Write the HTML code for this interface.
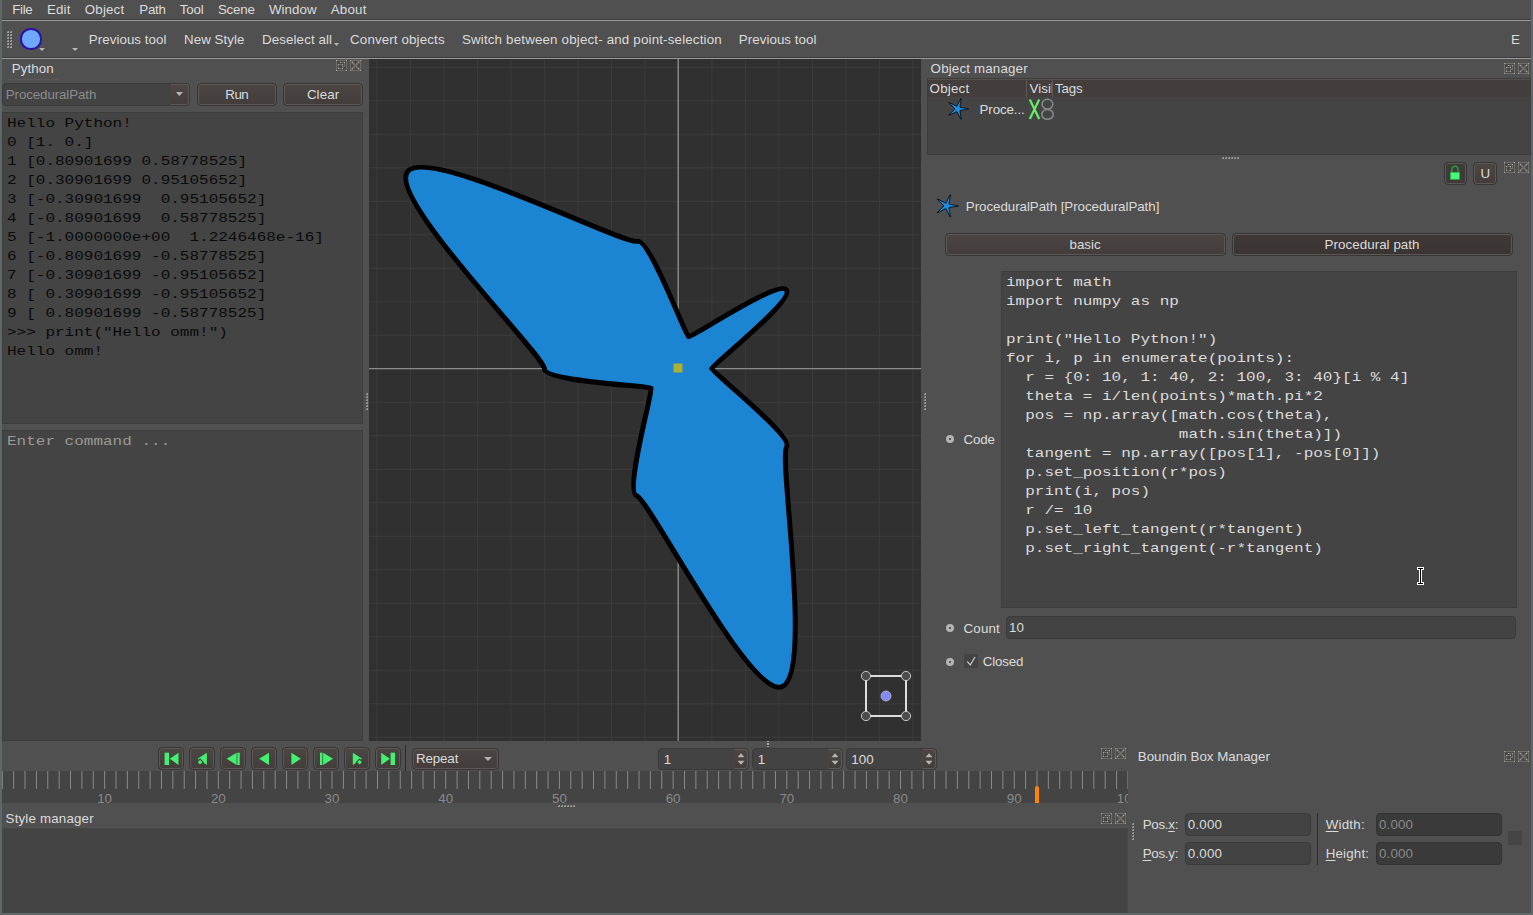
<!DOCTYPE html><html><head><meta charset="utf-8"><title>ommpfritt</title><style>

html,body{margin:0;padding:0;background:#505050;}
body{width:1533px;height:915px;position:relative;overflow:hidden;font-family:"Liberation Sans",sans-serif;}
.a{position:absolute;}
.t{position:absolute;white-space:pre;font-family:"Liberation Sans",sans-serif;}
.t u{text-decoration:underline;text-underline-offset:2px;}
.base{position:absolute;background:#444444;border:1px solid #3d3d3d;box-sizing:border-box;}
.btn{position:absolute;box-sizing:border-box;border:1px solid #363636;border-radius:4px;background:linear-gradient(#4b4544,#423c3b);box-shadow:inset 0 0 0 1px #5d5755;}
.field{position:absolute;box-sizing:border-box;border:1px solid #3a3a3a;border-radius:4px;background:#434343;}
.mono{position:absolute;white-space:pre;font-family:"Liberation Mono",monospace;font-size:13px;line-height:19px;transform:scaleX(1.2308);transform-origin:0 0;}
svg{position:absolute;overflow:visible;}

</style></head><body>
<div class="a" style="left:0;top:0;width:2px;height:915px;background:#5f6769"></div>
<div class="a" style="left:1531px;top:0;width:2px;height:915px;background:#5f6769"></div>
<div class="a" style="left:0;top:913px;width:1533px;height:2px;background:#5f6769"></div>
<div class="a" style="left:2px;top:19px;width:1529px;height:1px;background:#3c3c3c"></div>
<div class="a" style="left:2px;top:20px;width:1529px;height:1px;background:#9a9a9a"></div>
<div class="a" style="left:2px;top:57px;width:1529px;height:1px;background:#3c3c3c"></div>
<div class="a" style="left:2px;top:58px;width:1529px;height:1px;background:#9a9a9a"></div>
<div class="a" style="left:7px;top:31px;width:2px;height:2px;background:#a0a0a0"><div style="width:1px;height:1px;background:#707070"></div></div>
<div class="a" style="left:10px;top:31px;width:2px;height:2px;background:#a0a0a0"><div style="width:1px;height:1px;background:#707070"></div></div>
<div class="a" style="left:7px;top:34px;width:2px;height:2px;background:#a0a0a0"><div style="width:1px;height:1px;background:#707070"></div></div>
<div class="a" style="left:10px;top:34px;width:2px;height:2px;background:#a0a0a0"><div style="width:1px;height:1px;background:#707070"></div></div>
<div class="a" style="left:7px;top:37px;width:2px;height:2px;background:#a0a0a0"><div style="width:1px;height:1px;background:#707070"></div></div>
<div class="a" style="left:10px;top:37px;width:2px;height:2px;background:#a0a0a0"><div style="width:1px;height:1px;background:#707070"></div></div>
<div class="a" style="left:7px;top:40px;width:2px;height:2px;background:#a0a0a0"><div style="width:1px;height:1px;background:#707070"></div></div>
<div class="a" style="left:10px;top:40px;width:2px;height:2px;background:#a0a0a0"><div style="width:1px;height:1px;background:#707070"></div></div>
<div class="a" style="left:7px;top:43px;width:2px;height:2px;background:#a0a0a0"><div style="width:1px;height:1px;background:#707070"></div></div>
<div class="a" style="left:10px;top:43px;width:2px;height:2px;background:#a0a0a0"><div style="width:1px;height:1px;background:#707070"></div></div>
<div class="a" style="left:7px;top:46px;width:2px;height:2px;background:#a0a0a0"><div style="width:1px;height:1px;background:#707070"></div></div>
<div class="a" style="left:10px;top:46px;width:2px;height:2px;background:#a0a0a0"><div style="width:1px;height:1px;background:#707070"></div></div>
<div class="a" style="left:20.4px;top:28.4px;width:17.2px;height:17.2px;border:2px solid #2a12a4;border-radius:50%;background:#6ea8ff"></div>
<svg style="left:39.0px;top:48.0px" width="6" height="3"><path d="M0 0h6 l-3.0 3 z" fill="#b8b8b8"/></svg>
<svg style="left:72.0px;top:48.0px" width="6" height="3"><path d="M0 0h6 l-3.0 3 z" fill="#b8b8b8"/></svg>
<svg style="left:333.5px;top:43.0px" width="5" height="3"><path d="M0 0h5 l-2.5 3 z" fill="#b8b8b8"/></svg>
<svg style="left:336px;top:60px" width="26" height="12" viewBox="0 0 26 12" shape-rendering="crispEdges"><rect x="0.5" y="0.5" width="10" height="10" fill="#494949" stroke="#6f6d6a" stroke-width="1"/><rect x="0" y="0" width="1" height="1" fill="#a9a5a1"/><rect x="10" y="0" width="1" height="1" fill="#a9a5a1"/><rect x="0" y="10" width="1" height="1" fill="#a9a5a1"/><rect x="10" y="10" width="1" height="1" fill="#a9a5a1"/><rect x="14.5" y="0.5" width="10" height="10" fill="#494949" stroke="#6f6d6a" stroke-width="1"/><rect x="14" y="0" width="1" height="1" fill="#a9a5a1"/><rect x="24" y="0" width="1" height="1" fill="#a9a5a1"/><rect x="14" y="10" width="1" height="1" fill="#a9a5a1"/><rect x="24" y="10" width="1" height="1" fill="#a9a5a1"/><path d="M4.5 2.5h4v4h-2" fill="none" stroke="#6f6d6a" stroke-width="1"/><rect x="2.5" y="4.5" width="4" height="4" fill="#454545" stroke="#6f6d6a" stroke-width="1"/><rect x="4" y="2" width="1" height="1" fill="#a9a5a1"/><rect x="8" y="2" width="1" height="1" fill="#a9a5a1"/><rect x="2" y="4" width="1" height="1" fill="#a9a5a1"/><rect x="6" y="4" width="1" height="1" fill="#a9a5a1"/><rect x="2" y="8" width="1" height="1" fill="#a9a5a1"/><rect x="6" y="8" width="1" height="1" fill="#a9a5a1"/><path d="M15.5 1.5l8 8M23.5 1.5l-8 8" fill="none" stroke="#706d6a" stroke-width="1.8" shape-rendering="auto"/><rect x="16" y="2" width="1" height="1" fill="#a9a5a1"/><rect x="22" y="2" width="1" height="1" fill="#a9a5a1"/><rect x="16" y="8" width="1" height="1" fill="#a9a5a1"/><rect x="22" y="8" width="1" height="1" fill="#a9a5a1"/></svg>
<div class="a" style="left:8px;top:79px;width:50px;height:1px;background:#585858"></div>
<div class="field" style="left:2px;top:83px;width:188px;height:23px;background:#434343"></div>
<div class="a" style="left:171px;top:84px;width:18px;height:21px;box-sizing:border-box;border:1px solid #5d5755;border-left:none;border-radius:0 3px 3px 0;background:linear-gradient(#4d4645,#433d3c)"></div>
<svg style="left:176.0px;top:92.3px" width="7" height="4"><path d="M0 0h7 l-3.7 4 z" fill="#b4b4b4"/></svg>
<div class="btn" style="left:197px;top:83px;width:80px;height:23px"></div>
<div class="btn" style="left:283px;top:83px;width:80px;height:23px"></div>
<div class="base" style="left:2px;top:112px;width:361px;height:312px"></div>
<div class="base" style="left:2px;top:430px;width:361px;height:311px"></div>
<div class="mono" style="left:7px;top:113.6px;color:#0a0a0a">Hello Python!
0 [1. 0.]
1 [0.80901699 0.58778525]
2 [0.30901699 0.95105652]
3 [-0.30901699  0.95105652]
4 [-0.80901699  0.58778525]
5 [-1.0000000e+00  1.2246468e-16]
6 [-0.80901699 -0.58778525]
7 [-0.30901699 -0.95105652]
8 [ 0.30901699 -0.95105652]
9 [ 0.80901699 -0.58778525]
&gt;&gt;&gt; print("Hello omm!")
Hello omm!</div>
<div class="mono" style="left:7px;top:431.6px;color:#9a9a9a">Enter command ...</div>
<div class="a" style="left:366px;top:393px;width:2px;height:2px;background:#9a9a9a"><div style="width:1px;height:1px;background:#6c6c6c"></div></div><div class="a" style="left:366px;top:396px;width:2px;height:2px;background:#9a9a9a"><div style="width:1px;height:1px;background:#6c6c6c"></div></div><div class="a" style="left:366px;top:399px;width:2px;height:2px;background:#9a9a9a"><div style="width:1px;height:1px;background:#6c6c6c"></div></div><div class="a" style="left:366px;top:402px;width:2px;height:2px;background:#9a9a9a"><div style="width:1px;height:1px;background:#6c6c6c"></div></div><div class="a" style="left:366px;top:405px;width:2px;height:2px;background:#9a9a9a"><div style="width:1px;height:1px;background:#6c6c6c"></div></div><div class="a" style="left:366px;top:408px;width:2px;height:2px;background:#9a9a9a"><div style="width:1px;height:1px;background:#6c6c6c"></div></div>
<svg style="left:369px;top:59px" width="552" height="682" viewBox="369 59 552 682">
<rect x="369" y="59" width="552" height="682" fill="#303030"/>
<path d="M376.90 59 V741 M369 67.30 H921 M410.40 59 V741 M369 100.80 H921 M443.90 59 V741 M369 134.30 H921 M477.40 59 V741 M369 167.80 H921 M510.90 59 V741 M369 201.30 H921 M544.40 59 V741 M369 234.80 H921 M577.90 59 V741 M369 268.30 H921 M611.40 59 V741 M369 301.80 H921 M644.90 59 V741 M369 335.30 H921 M711.90 59 V741 M369 402.30 H921 M745.40 59 V741 M369 435.80 H921 M778.90 59 V741 M369 469.30 H921 M812.40 59 V741 M369 502.80 H921 M845.90 59 V741 M369 536.30 H921 M879.40 59 V741 M369 569.80 H921 M912.90 59 V741 M369 603.30 H921 M369 636.80 H921 M369 670.30 H921 M369 703.80 H921 M369 737.30 H921" stroke="#3c3c3c" stroke-width="1" fill="none"/>
<path d="M678.20 59 V741 M369 368.60 H921" stroke="#8c8c8c" stroke-width="1.4" fill="none"/>
<path d="M711.67 368.60 C711.67 371.95 794.38 436.46 786.51 447.29 C778.64 458.12 813.46 676.58 781.63 686.92 C749.80 697.26 649.56 500.06 636.83 495.93 C624.10 491.79 653.09 390.98 651.12 388.27 C649.15 385.57 544.32 381.99 544.32 368.60 C544.32 355.21 387.75 198.95 407.42 171.87 C427.10 144.79 624.10 245.41 636.83 241.27 C649.56 237.14 685.36 335.73 688.54 336.77 C691.73 337.80 778.64 279.08 786.51 289.91 C794.38 300.74 711.67 365.25 711.67 368.60Z" fill="#1b84d3" stroke="#000" stroke-width="5" stroke-linejoin="round"/>
<rect x="673.5" y="363.5" width="9" height="9" fill="#b0b030"/>
<rect x="866" y="676" width="40" height="40" fill="none" stroke="#dcdcdc" stroke-width="2"/>
<circle cx="866" cy="676" r="4.6" fill="#4c4c4c" stroke="#d6d6d6" stroke-width="0.9"/>
<circle cx="906" cy="676" r="4.6" fill="#4c4c4c" stroke="#d6d6d6" stroke-width="0.9"/>
<circle cx="866" cy="716" r="4.6" fill="#4c4c4c" stroke="#d6d6d6" stroke-width="0.9"/>
<circle cx="906" cy="716" r="4.6" fill="#4c4c4c" stroke="#d6d6d6" stroke-width="0.9"/>
<circle cx="886" cy="696" r="5" fill="#8888f2" stroke="#b4b4d0" stroke-width="0.8"/>
</svg>
<div class="a" style="left:924px;top:393px;width:2px;height:2px;background:#9a9a9a"><div style="width:1px;height:1px;background:#6c6c6c"></div></div><div class="a" style="left:924px;top:396px;width:2px;height:2px;background:#9a9a9a"><div style="width:1px;height:1px;background:#6c6c6c"></div></div><div class="a" style="left:924px;top:399px;width:2px;height:2px;background:#9a9a9a"><div style="width:1px;height:1px;background:#6c6c6c"></div></div><div class="a" style="left:924px;top:402px;width:2px;height:2px;background:#9a9a9a"><div style="width:1px;height:1px;background:#6c6c6c"></div></div><div class="a" style="left:924px;top:405px;width:2px;height:2px;background:#9a9a9a"><div style="width:1px;height:1px;background:#6c6c6c"></div></div><div class="a" style="left:924px;top:408px;width:2px;height:2px;background:#9a9a9a"><div style="width:1px;height:1px;background:#6c6c6c"></div></div>
<svg style="left:1504px;top:63px" width="26" height="12" viewBox="0 0 26 12" shape-rendering="crispEdges"><rect x="0.5" y="0.5" width="10" height="10" fill="#494949" stroke="#6f6d6a" stroke-width="1"/><rect x="0" y="0" width="1" height="1" fill="#a9a5a1"/><rect x="10" y="0" width="1" height="1" fill="#a9a5a1"/><rect x="0" y="10" width="1" height="1" fill="#a9a5a1"/><rect x="10" y="10" width="1" height="1" fill="#a9a5a1"/><rect x="14.5" y="0.5" width="10" height="10" fill="#494949" stroke="#6f6d6a" stroke-width="1"/><rect x="14" y="0" width="1" height="1" fill="#a9a5a1"/><rect x="24" y="0" width="1" height="1" fill="#a9a5a1"/><rect x="14" y="10" width="1" height="1" fill="#a9a5a1"/><rect x="24" y="10" width="1" height="1" fill="#a9a5a1"/><path d="M4.5 2.5h4v4h-2" fill="none" stroke="#6f6d6a" stroke-width="1"/><rect x="2.5" y="4.5" width="4" height="4" fill="#454545" stroke="#6f6d6a" stroke-width="1"/><rect x="4" y="2" width="1" height="1" fill="#a9a5a1"/><rect x="8" y="2" width="1" height="1" fill="#a9a5a1"/><rect x="2" y="4" width="1" height="1" fill="#a9a5a1"/><rect x="6" y="4" width="1" height="1" fill="#a9a5a1"/><rect x="2" y="8" width="1" height="1" fill="#a9a5a1"/><rect x="6" y="8" width="1" height="1" fill="#a9a5a1"/><path d="M15.5 1.5l8 8M23.5 1.5l-8 8" fill="none" stroke="#706d6a" stroke-width="1.8" shape-rendering="auto"/><rect x="16" y="2" width="1" height="1" fill="#a9a5a1"/><rect x="22" y="2" width="1" height="1" fill="#a9a5a1"/><rect x="16" y="8" width="1" height="1" fill="#a9a5a1"/><rect x="22" y="8" width="1" height="1" fill="#a9a5a1"/></svg>
<div class="base" style="left:927px;top:78px;width:604px;height:77px"></div>
<div class="a" style="left:928px;top:79px;width:602px;height:18px;background:#433d3c;border-top:1px solid #56504e;box-sizing:border-box"></div>
<div class="a" style="left:1026px;top:79px;width:1px;height:18px;background:#5e5856"></div>
<div class="a" style="left:1052px;top:79px;width:1px;height:18px;background:#5e5856"></div>
<div class="a" style="left:1051px;top:83px;width:1px;height:10px;background:#4f6696"></div>
<svg style="left:0;top:0" width="1533" height="915"><path d="M959.97 107.25 C961.62 107.75 965.88 108.05 968.60 108.90 C965.88 109.75 961.62 110.05 959.97 110.55 C960.01 112.28 961.03 116.41 961.07 119.27 C959.42 116.94 957.82 112.99 956.83 111.56 C955.20 112.14 951.59 114.39 948.88 115.31 C950.59 113.02 953.85 110.28 954.90 108.90 C953.85 107.52 950.59 104.78 948.88 102.49 C951.59 103.41 955.20 105.66 956.83 106.24 C957.82 104.81 959.42 100.86 961.07 98.53 C961.03 101.39 960.01 105.52 959.97 107.25Z" fill="#1c8ee0" stroke="#000" stroke-width="0.8" stroke-linejoin="round"/></svg>
<svg style="left:1028px;top:98px" width="30" height="24"><path d="M1.8 1.5 L11.2 21 M11.2 1.500 L1.8 21" stroke="#66ee66" stroke-width="2.2" fill="none"/><ellipse cx="19.5" cy="6.2" rx="5.4" ry="4.9" fill="none" stroke="#8a8a8a" stroke-width="1.5"/><ellipse cx="19.5" cy="16.4" rx="5.7" ry="4.9" fill="none" stroke="#8a8a8a" stroke-width="1.5"/></svg>
<div class="a" style="left:1222px;top:157px;width:2px;height:2px;background:#9a9a9a"><div style="width:1px;height:1px;background:#6c6c6c"></div></div><div class="a" style="left:1225px;top:157px;width:2px;height:2px;background:#9a9a9a"><div style="width:1px;height:1px;background:#6c6c6c"></div></div><div class="a" style="left:1228px;top:157px;width:2px;height:2px;background:#9a9a9a"><div style="width:1px;height:1px;background:#6c6c6c"></div></div><div class="a" style="left:1231px;top:157px;width:2px;height:2px;background:#9a9a9a"><div style="width:1px;height:1px;background:#6c6c6c"></div></div><div class="a" style="left:1234px;top:157px;width:2px;height:2px;background:#9a9a9a"><div style="width:1px;height:1px;background:#6c6c6c"></div></div><div class="a" style="left:1237px;top:157px;width:2px;height:2px;background:#9a9a9a"><div style="width:1px;height:1px;background:#6c6c6c"></div></div>
<svg style="left:1504px;top:162px" width="26" height="12" viewBox="0 0 26 12" shape-rendering="crispEdges"><rect x="0.5" y="0.5" width="10" height="10" fill="#494949" stroke="#6f6d6a" stroke-width="1"/><rect x="0" y="0" width="1" height="1" fill="#a9a5a1"/><rect x="10" y="0" width="1" height="1" fill="#a9a5a1"/><rect x="0" y="10" width="1" height="1" fill="#a9a5a1"/><rect x="10" y="10" width="1" height="1" fill="#a9a5a1"/><rect x="14.5" y="0.5" width="10" height="10" fill="#494949" stroke="#6f6d6a" stroke-width="1"/><rect x="14" y="0" width="1" height="1" fill="#a9a5a1"/><rect x="24" y="0" width="1" height="1" fill="#a9a5a1"/><rect x="14" y="10" width="1" height="1" fill="#a9a5a1"/><rect x="24" y="10" width="1" height="1" fill="#a9a5a1"/><path d="M4.5 2.5h4v4h-2" fill="none" stroke="#6f6d6a" stroke-width="1"/><rect x="2.5" y="4.5" width="4" height="4" fill="#454545" stroke="#6f6d6a" stroke-width="1"/><rect x="4" y="2" width="1" height="1" fill="#a9a5a1"/><rect x="8" y="2" width="1" height="1" fill="#a9a5a1"/><rect x="2" y="4" width="1" height="1" fill="#a9a5a1"/><rect x="6" y="4" width="1" height="1" fill="#a9a5a1"/><rect x="2" y="8" width="1" height="1" fill="#a9a5a1"/><rect x="6" y="8" width="1" height="1" fill="#a9a5a1"/><path d="M15.5 1.5l8 8M23.5 1.5l-8 8" fill="none" stroke="#706d6a" stroke-width="1.8" shape-rendering="auto"/><rect x="16" y="2" width="1" height="1" fill="#a9a5a1"/><rect x="22" y="2" width="1" height="1" fill="#a9a5a1"/><rect x="16" y="8" width="1" height="1" fill="#a9a5a1"/><rect x="22" y="8" width="1" height="1" fill="#a9a5a1"/></svg>
<div class="btn" style="left:1443.500px;top:161.500px;width:23.300px;height:23.300px;background:#3f3938"></div>
<div class="btn" style="left:1473.300px;top:161.500px;width:23.300px;height:23.300px"></div>
<svg style="left:1447px;top:164px" width="16" height="18"><path d="M5 8.5 V5.2 a3 3 0 0 1 6 0 V8.5" fill="none" stroke="#2a9a3c" stroke-width="1.4"/><rect x="3.500" y="8.300" width="9" height="7" fill="#46fa7a" stroke="#2eae4c" stroke-width="0.8"/></svg>
<svg style="left:0;top:0" width="1533" height="915"><path d="M948.97 204.25 C950.95 204.75 955.55 205.05 958.50 205.90 C955.55 206.75 950.95 207.05 948.97 207.55 C949.11 209.58 950.24 214.05 950.35 217.12 C948.63 214.58 946.92 210.30 945.83 208.56 C943.94 209.33 940.04 211.79 937.15 212.84 C939.04 210.41 942.59 207.47 943.90 205.90 C942.59 204.33 939.04 201.39 937.15 198.96 C940.04 200.01 943.94 202.47 945.83 203.24 C946.92 201.50 948.63 197.22 950.35 194.68 C950.24 197.75 949.11 202.22 948.97 204.25Z" fill="#1c8ee0" stroke="#000" stroke-width="0.8" stroke-linejoin="round"/></svg>
<div class="btn" style="left:945px;top:233px;width:281px;height:22.500px"></div>
<div class="btn" style="left:1232px;top:233px;width:281px;height:22.500px;background:linear-gradient(#3e3837,#3a3433)"></div>
<div class="a" style="left:945.8px;top:434.9px;width:2.500px;height:2.500px;border:3px solid #b4b4b4;border-radius:50%;background:#3a3a3a"></div>
<div class="a" style="left:945.8px;top:623.8px;width:2.500px;height:2.500px;border:3px solid #b4b4b4;border-radius:50%;background:#3a3a3a"></div>
<div class="a" style="left:945.8px;top:657.5px;width:2.500px;height:2.500px;border:3px solid #b4b4b4;border-radius:50%;background:#3a3a3a"></div>
<div class="base" style="left:1001px;top:271px;width:515.500px;height:336.500px"></div>
<div class="mono" style="left:1006px;top:273px;color:#dcdcdc">import math
import numpy as np

print("Hello Python!")
for i, p in enumerate(points):
  r = {0: 10, 1: 40, 2: 100, 3: 40}[i % 4]
  theta = i/len(points)*math.pi*2
  pos = np.array([math.cos(theta),
                  math.sin(theta)])
  tangent = np.array([pos[1], -pos[0]])
  p.set_position(r*pos)
  print(i, pos)
  r /= 10
  p.set_left_tangent(r*tangent)
  p.set_right_tangent(-r*tangent)</div>
<div class="field" style="left:1006px;top:616px;width:510px;height:23px"></div>
<div class="a" style="left:964px;top:654px;width:14px;height:14px;background:#434343;border-radius:1px"></div>
<svg style="left:964px;top:654px" width="14" height="14"><path d="M3.2 7.300 L6.3 11 L11 3" fill="none" stroke="#cacaca" stroke-width="1.25"/></svg>
<svg style="left:1416px;top:566px" width="10" height="20" shape-rendering="crispEdges"><rect x="1" y="1" width="7" height="3" fill="#fff" rx="1"/><rect x="1" y="16" width="7" height="3" fill="#fff"/><rect x="3" y="1" width="3" height="18" fill="#fff"/><rect x="4" y="2" width="1" height="16" fill="#000"/><rect x="2" y="2" width="5" height="1" fill="#000"/><rect x="2" y="17" width="5" height="1" fill="#000"/></svg>
<div class="a" style="left:767px;top:741px;width:2px;height:1px;background:#a0a0a0"></div><div class="a" style="left:767px;top:743.3px;width:2px;height:2px;background:#a8a8a8"></div><div class="a" style="left:767px;top:746px;width:2px;height:1px;background:#909090"></div>
<svg style="left:1101px;top:748px" width="26" height="12" viewBox="0 0 26 12" shape-rendering="crispEdges"><rect x="0.5" y="0.5" width="10" height="10" fill="#494949" stroke="#6f6d6a" stroke-width="1"/><rect x="0" y="0" width="1" height="1" fill="#a9a5a1"/><rect x="10" y="0" width="1" height="1" fill="#a9a5a1"/><rect x="0" y="10" width="1" height="1" fill="#a9a5a1"/><rect x="10" y="10" width="1" height="1" fill="#a9a5a1"/><rect x="14.5" y="0.5" width="10" height="10" fill="#494949" stroke="#6f6d6a" stroke-width="1"/><rect x="14" y="0" width="1" height="1" fill="#a9a5a1"/><rect x="24" y="0" width="1" height="1" fill="#a9a5a1"/><rect x="14" y="10" width="1" height="1" fill="#a9a5a1"/><rect x="24" y="10" width="1" height="1" fill="#a9a5a1"/><path d="M4.5 2.5h4v4h-2" fill="none" stroke="#6f6d6a" stroke-width="1"/><rect x="2.5" y="4.5" width="4" height="4" fill="#454545" stroke="#6f6d6a" stroke-width="1"/><rect x="4" y="2" width="1" height="1" fill="#a9a5a1"/><rect x="8" y="2" width="1" height="1" fill="#a9a5a1"/><rect x="2" y="4" width="1" height="1" fill="#a9a5a1"/><rect x="6" y="4" width="1" height="1" fill="#a9a5a1"/><rect x="2" y="8" width="1" height="1" fill="#a9a5a1"/><rect x="6" y="8" width="1" height="1" fill="#a9a5a1"/><path d="M15.5 1.5l8 8M23.5 1.5l-8 8" fill="none" stroke="#706d6a" stroke-width="1.8" shape-rendering="auto"/><rect x="16" y="2" width="1" height="1" fill="#a9a5a1"/><rect x="22" y="2" width="1" height="1" fill="#a9a5a1"/><rect x="16" y="8" width="1" height="1" fill="#a9a5a1"/><rect x="22" y="8" width="1" height="1" fill="#a9a5a1"/></svg>
<div class="btn" style="left:157.5px;top:747.3px;width:26.7px;height:23px"></div>
<svg style="left:157.5px;top:747px" width="27" height="24"><rect x="6.6" y="5.7" width="4.5" height="12.3" fill="#44f070"/><path d="M20.5 5.7V18.0L11.8 11.8z" fill="#44f070"/></svg>
<div class="btn" style="left:188.5px;top:747.3px;width:26.7px;height:23px"></div>
<svg style="left:188.5px;top:747px" width="27" height="24"><path d="M17.9 5.7V18.0L8.5 11.8z" fill="#44f070"/><path d="M11.1 12.1l3.1 3.1l-3.1 3.1l-3.1 -3.1z" fill="#44f070" stroke="#433d3c" stroke-width="1.1"/></svg>
<div class="btn" style="left:219.5px;top:747.3px;width:26.7px;height:23px"></div>
<svg style="left:219.5px;top:747px" width="27" height="24"><path d="M16.6 5.7V18.0L6.7 11.8z" fill="#44f070"/><rect x="17.3" y="5.7" width="2.4" height="12.3" fill="#44f070"/></svg>
<div class="btn" style="left:250.5px;top:747.3px;width:26.7px;height:23px"></div>
<svg style="left:250.5px;top:747px" width="27" height="24"><path d="M18.0 5.7V18.0L8.1 11.8z" fill="#44f070"/></svg>
<div class="btn" style="left:281.5px;top:747.3px;width:26.7px;height:23px"></div>
<svg style="left:281.5px;top:747px" width="27" height="24"><path d="M9.4 5.7V18.0L18.8 11.8z" fill="#44f070"/></svg>
<div class="btn" style="left:312.5px;top:747.3px;width:26.7px;height:23px"></div>
<svg style="left:312.5px;top:747px" width="27" height="24"><rect x="7.0" y="5.7" width="2.4" height="12.3" fill="#44f070"/><path d="M10.1 5.7V18.0L20.0 11.8z" fill="#44f070"/></svg>
<div class="btn" style="left:343.5px;top:747.3px;width:26.7px;height:23px"></div>
<svg style="left:343.5px;top:747px" width="27" height="24"><path d="M8.8 5.7V18.0L18.2 11.8z" fill="#44f070"/><path d="M15.6 12.1l3.1 3.1l-3.1 3.1l-3.1 -3.1z" fill="#44f070" stroke="#433d3c" stroke-width="1.1"/></svg>
<div class="btn" style="left:374.5px;top:747.3px;width:26.7px;height:23px"></div>
<svg style="left:374.5px;top:747px" width="27" height="24"><path d="M6.2 5.7V18.0L14.9 11.8z" fill="#44f070"/><rect x="15.6" y="5.7" width="4.5" height="12.3" fill="#44f070"/></svg>
<div class="a" style="left:405.2px;top:745px;width:1px;height:27px;background:#2a2a2a"></div>
<div class="btn" style="left:411.5px;top:747.5px;width:87px;height:22px"></div>
<svg style="left:484.0px;top:757.0px" width="8" height="4"><path d="M0 0h8 l-4.0 4 z" fill="#b0b0b0"/></svg>
<div class="field" style="left:658px;top:748px;width:91px;height:22px"></div>
<div class="a" style="left:734px;top:749px;width:14px;height:20px;box-sizing:border-box;border:1px solid #5f5957;border-left-color:#4a4443;border-radius:0 4px 4px 0;background:linear-gradient(#4b4544,#433d3c)"></div>
<svg style="left:734px;top:749px" width="14" height="20"><path d="M3.500 8.300h7l-3.500-4z M3.500 11.800h7l-3.500 4z" fill="#b4b4b4"/></svg>
<div class="field" style="left:752px;top:748px;width:91px;height:22px"></div>
<div class="a" style="left:828px;top:749px;width:14px;height:20px;box-sizing:border-box;border:1px solid #5f5957;border-left-color:#4a4443;border-radius:0 4px 4px 0;background:linear-gradient(#4b4544,#433d3c)"></div>
<svg style="left:828px;top:749px" width="14" height="20"><path d="M3.500 8.300h7l-3.500-4z M3.500 11.800h7l-3.500 4z" fill="#b4b4b4"/></svg>
<div class="field" style="left:846px;top:748px;width:91px;height:22px"></div>
<div class="a" style="left:922px;top:749px;width:14px;height:20px;box-sizing:border-box;border:1px solid #5f5957;border-left-color:#4a4443;border-radius:0 4px 4px 0;background:linear-gradient(#4b4544,#433d3c)"></div>
<svg style="left:922px;top:749px" width="14" height="20"><path d="M3.500 8.300h7l-3.500-4z M3.500 11.800h7l-3.500 4z" fill="#b4b4b4"/></svg>
<div class="a" style="left:2px;top:770.500px;width:1126px;height:32.500px;background:#444;overflow:hidden">
<svg style="left:0;top:0" width="1126" height="33"><path d="M0.30 0V18 M11.67 0V18 M23.04 0V18 M34.41 0V18 M45.78 0V18 M57.15 0V18 M68.52 0V18 M79.89 0V18 M91.26 0V18 M102.63 0V18 M114.00 0V18 M125.37 0V18 M136.74 0V18 M148.11 0V18 M159.48 0V18 M170.85 0V18 M182.22 0V18 M193.59 0V18 M204.96 0V18 M216.33 0V18 M227.70 0V18 M239.07 0V18 M250.44 0V18 M261.81 0V18 M273.18 0V18 M284.55 0V18 M295.92 0V18 M307.29 0V18 M318.66 0V18 M330.03 0V18 M341.40 0V18 M352.77 0V18 M364.14 0V18 M375.51 0V18 M386.88 0V18 M398.25 0V18 M409.62 0V18 M420.99 0V18 M432.36 0V18 M443.73 0V18 M455.10 0V18 M466.47 0V18 M477.84 0V18 M489.21 0V18 M500.58 0V18 M511.95 0V18 M523.32 0V18 M534.69 0V18 M546.06 0V18 M557.43 0V18 M568.80 0V18 M580.17 0V18 M591.54 0V18 M602.91 0V18 M614.28 0V18 M625.65 0V18 M637.02 0V18 M648.39 0V18 M659.76 0V18 M671.13 0V18 M682.50 0V18 M693.87 0V18 M705.24 0V18 M716.61 0V18 M727.98 0V18 M739.35 0V18 M750.72 0V18 M762.09 0V18 M773.46 0V18 M784.83 0V18 M796.20 0V18 M807.57 0V18 M818.94 0V18 M830.31 0V18 M841.68 0V18 M853.05 0V18 M864.42 0V18 M875.79 0V18 M887.16 0V18 M898.53 0V18 M909.90 0V18 M921.27 0V18 M932.64 0V18 M944.01 0V18 M955.38 0V18 M966.75 0V18 M978.12 0V18 M989.49 0V18 M1000.86 0V18 M1012.23 0V18 M1023.60 0V18 M1034.97 0V18 M1046.34 0V18 M1057.71 0V18 M1069.08 0V18 M1080.45 0V18 M1091.82 0V18 M1103.19 0V18 M1114.56 0V18 M1125.93 0V18" stroke="#8a8a8a" stroke-width="1" fill="none"/></svg>
<span class="t" style="left:82.63px;top:21.500px;width:40px;text-align:center;font-size:13.33px;line-height:13.33px;color:#8a8a8a">10</span>
<span class="t" style="left:196.33px;top:21.500px;width:40px;text-align:center;font-size:13.33px;line-height:13.33px;color:#8a8a8a">20</span>
<span class="t" style="left:310.03px;top:21.500px;width:40px;text-align:center;font-size:13.33px;line-height:13.33px;color:#8a8a8a">30</span>
<span class="t" style="left:423.73px;top:21.500px;width:40px;text-align:center;font-size:13.33px;line-height:13.33px;color:#8a8a8a">40</span>
<span class="t" style="left:537.43px;top:21.500px;width:40px;text-align:center;font-size:13.33px;line-height:13.33px;color:#8a8a8a">50</span>
<span class="t" style="left:651.13px;top:21.500px;width:40px;text-align:center;font-size:13.33px;line-height:13.33px;color:#8a8a8a">60</span>
<span class="t" style="left:764.83px;top:21.500px;width:40px;text-align:center;font-size:13.33px;line-height:13.33px;color:#8a8a8a">70</span>
<span class="t" style="left:878.53px;top:21.500px;width:40px;text-align:center;font-size:13.33px;line-height:13.33px;color:#8a8a8a">80</span>
<span class="t" style="left:992.23px;top:21.500px;width:40px;text-align:center;font-size:13.33px;line-height:13.33px;color:#8a8a8a">90</span>
<span class="t" style="left:1105.93px;top:21.500px;width:40px;text-align:center;font-size:13.33px;line-height:13.33px;color:#8a8a8a">100</span>
<div class="a" style="left:1032.700px;top:15.500px;width:4.200px;height:17px;background:#ff8200;border-radius:2px 2px 0 0"></div>
</div>
<div class="a" style="left:558px;top:805px;width:2px;height:2px;background:#9a9a9a"><div style="width:1px;height:1px;background:#6c6c6c"></div></div><div class="a" style="left:561px;top:805px;width:2px;height:2px;background:#9a9a9a"><div style="width:1px;height:1px;background:#6c6c6c"></div></div><div class="a" style="left:564px;top:805px;width:2px;height:2px;background:#9a9a9a"><div style="width:1px;height:1px;background:#6c6c6c"></div></div><div class="a" style="left:567px;top:805px;width:2px;height:2px;background:#9a9a9a"><div style="width:1px;height:1px;background:#6c6c6c"></div></div><div class="a" style="left:570px;top:805px;width:2px;height:2px;background:#9a9a9a"><div style="width:1px;height:1px;background:#6c6c6c"></div></div><div class="a" style="left:573px;top:805px;width:2px;height:2px;background:#9a9a9a"><div style="width:1px;height:1px;background:#6c6c6c"></div></div>
<svg style="left:1101px;top:813px" width="26" height="12" viewBox="0 0 26 12" shape-rendering="crispEdges"><rect x="0.5" y="0.5" width="10" height="10" fill="#494949" stroke="#6f6d6a" stroke-width="1"/><rect x="0" y="0" width="1" height="1" fill="#a9a5a1"/><rect x="10" y="0" width="1" height="1" fill="#a9a5a1"/><rect x="0" y="10" width="1" height="1" fill="#a9a5a1"/><rect x="10" y="10" width="1" height="1" fill="#a9a5a1"/><rect x="14.5" y="0.5" width="10" height="10" fill="#494949" stroke="#6f6d6a" stroke-width="1"/><rect x="14" y="0" width="1" height="1" fill="#a9a5a1"/><rect x="24" y="0" width="1" height="1" fill="#a9a5a1"/><rect x="14" y="10" width="1" height="1" fill="#a9a5a1"/><rect x="24" y="10" width="1" height="1" fill="#a9a5a1"/><path d="M4.5 2.5h4v4h-2" fill="none" stroke="#6f6d6a" stroke-width="1"/><rect x="2.5" y="4.5" width="4" height="4" fill="#454545" stroke="#6f6d6a" stroke-width="1"/><rect x="4" y="2" width="1" height="1" fill="#a9a5a1"/><rect x="8" y="2" width="1" height="1" fill="#a9a5a1"/><rect x="2" y="4" width="1" height="1" fill="#a9a5a1"/><rect x="6" y="4" width="1" height="1" fill="#a9a5a1"/><rect x="2" y="8" width="1" height="1" fill="#a9a5a1"/><rect x="6" y="8" width="1" height="1" fill="#a9a5a1"/><path d="M15.5 1.5l8 8M23.5 1.5l-8 8" fill="none" stroke="#706d6a" stroke-width="1.8" shape-rendering="auto"/><rect x="16" y="2" width="1" height="1" fill="#a9a5a1"/><rect x="22" y="2" width="1" height="1" fill="#a9a5a1"/><rect x="16" y="8" width="1" height="1" fill="#a9a5a1"/><rect x="22" y="8" width="1" height="1" fill="#a9a5a1"/></svg>
<div class="base" style="left:2px;top:828px;width:1126px;height:85px;border-color:#474747"></div>
<div class="a" style="left:1132px;top:823px;width:2px;height:2px;background:#9a9a9a"><div style="width:1px;height:1px;background:#6c6c6c"></div></div><div class="a" style="left:1132px;top:826px;width:2px;height:2px;background:#9a9a9a"><div style="width:1px;height:1px;background:#6c6c6c"></div></div><div class="a" style="left:1132px;top:829px;width:2px;height:2px;background:#9a9a9a"><div style="width:1px;height:1px;background:#6c6c6c"></div></div><div class="a" style="left:1132px;top:832px;width:2px;height:2px;background:#9a9a9a"><div style="width:1px;height:1px;background:#6c6c6c"></div></div><div class="a" style="left:1132px;top:835px;width:2px;height:2px;background:#9a9a9a"><div style="width:1px;height:1px;background:#6c6c6c"></div></div><div class="a" style="left:1132px;top:838px;width:2px;height:2px;background:#9a9a9a"><div style="width:1px;height:1px;background:#6c6c6c"></div></div>
<svg style="left:1504px;top:751px" width="26" height="12" viewBox="0 0 26 12" shape-rendering="crispEdges"><rect x="0.5" y="0.5" width="10" height="10" fill="#494949" stroke="#6f6d6a" stroke-width="1"/><rect x="0" y="0" width="1" height="1" fill="#a9a5a1"/><rect x="10" y="0" width="1" height="1" fill="#a9a5a1"/><rect x="0" y="10" width="1" height="1" fill="#a9a5a1"/><rect x="10" y="10" width="1" height="1" fill="#a9a5a1"/><rect x="14.5" y="0.5" width="10" height="10" fill="#494949" stroke="#6f6d6a" stroke-width="1"/><rect x="14" y="0" width="1" height="1" fill="#a9a5a1"/><rect x="24" y="0" width="1" height="1" fill="#a9a5a1"/><rect x="14" y="10" width="1" height="1" fill="#a9a5a1"/><rect x="24" y="10" width="1" height="1" fill="#a9a5a1"/><path d="M4.5 2.5h4v4h-2" fill="none" stroke="#6f6d6a" stroke-width="1"/><rect x="2.5" y="4.5" width="4" height="4" fill="#454545" stroke="#6f6d6a" stroke-width="1"/><rect x="4" y="2" width="1" height="1" fill="#a9a5a1"/><rect x="8" y="2" width="1" height="1" fill="#a9a5a1"/><rect x="2" y="4" width="1" height="1" fill="#a9a5a1"/><rect x="6" y="4" width="1" height="1" fill="#a9a5a1"/><rect x="2" y="8" width="1" height="1" fill="#a9a5a1"/><rect x="6" y="8" width="1" height="1" fill="#a9a5a1"/><path d="M15.5 1.5l8 8M23.5 1.5l-8 8" fill="none" stroke="#706d6a" stroke-width="1.8" shape-rendering="auto"/><rect x="16" y="2" width="1" height="1" fill="#a9a5a1"/><rect x="22" y="2" width="1" height="1" fill="#a9a5a1"/><rect x="16" y="8" width="1" height="1" fill="#a9a5a1"/><rect x="22" y="8" width="1" height="1" fill="#a9a5a1"/></svg>
<div class="field" style="left:1185px;top:813px;width:126px;height:23px"></div>
<div class="field" style="left:1185px;top:842px;width:126px;height:23px"></div>
<div class="field" style="left:1376px;top:813px;width:126px;height:23px;background:#3a3a3a;border-color:#333"></div>
<div class="field" style="left:1376px;top:842px;width:126px;height:23px;background:#3a3a3a;border-color:#333"></div>
<div class="a" style="left:1317px;top:813px;width:1px;height:52px;background:#2c2c2c"></div>
<div class="a" style="left:1508px;top:831px;width:14px;height:14px;background:#454545"></div>
<span class="t" style="left:12.20px;top:2.99px;font-size:13.33px;line-height:13.33px;letter-spacing:-0.296px;color:#dcdcdc">File</span>
<span class="t" style="left:47.10px;top:2.99px;font-size:13.33px;line-height:13.33px;letter-spacing:0.108px;color:#dcdcdc">Edit</span>
<span class="t" style="left:84.80px;top:2.99px;font-size:13.33px;line-height:13.33px;letter-spacing:0.161px;color:#dcdcdc">Object</span>
<span class="t" style="left:139.30px;top:2.99px;font-size:13.33px;line-height:13.33px;letter-spacing:-0.280px;color:#dcdcdc">Path</span>
<span class="t" style="left:179.80px;top:2.99px;font-size:13.33px;line-height:13.33px;letter-spacing:-0.163px;color:#dcdcdc">Tool</span>
<span class="t" style="left:217.90px;top:2.99px;font-size:13.33px;line-height:13.33px;letter-spacing:-0.219px;color:#dcdcdc">Scene</span>
<span class="t" style="left:269.00px;top:2.99px;font-size:13.33px;line-height:13.33px;letter-spacing:0.032px;color:#dcdcdc">Window</span>
<span class="t" style="left:330.70px;top:2.99px;font-size:13.33px;line-height:13.33px;letter-spacing:0.231px;color:#dcdcdc">About</span>
<span class="t" style="left:88.80px;top:32.98px;font-size:13.33px;line-height:13.33px;letter-spacing:0.050px;color:#dcdcdc">Previous tool</span>
<span class="t" style="left:184.00px;top:32.98px;font-size:13.33px;line-height:13.33px;letter-spacing:0.056px;color:#dcdcdc">New Style</span>
<span class="t" style="left:262.00px;top:32.98px;font-size:13.33px;line-height:13.33px;letter-spacing:0.108px;color:#dcdcdc">Deselect all</span>
<span class="t" style="left:350.10px;top:32.98px;font-size:13.33px;line-height:13.33px;letter-spacing:0.133px;color:#dcdcdc">Convert objects</span>
<span class="t" style="left:461.90px;top:32.98px;font-size:13.33px;line-height:13.33px;letter-spacing:0.175px;color:#dcdcdc">Switch between object- and point-selection</span>
<span class="t" style="left:738.80px;top:32.98px;font-size:13.33px;line-height:13.33px;letter-spacing:0.050px;color:#dcdcdc">Previous tool</span>
<span class="t" style="left:1511.00px;top:32.98px;font-size:13.33px;line-height:13.33px;letter-spacing:-1.091px;color:#dcdcdc">E</span>
<span class="t" style="left:11.70px;top:61.99px;font-size:13.33px;line-height:13.33px;letter-spacing:0.100px;color:#dcdcdc">Python</span>
<span class="t" style="left:5.80px;top:87.99px;font-size:13.33px;line-height:13.33px;letter-spacing:-0.105px;color:#8c8c8c">ProceduralPath</span>
<span class="t" style="left:225.30px;top:87.99px;font-size:13.33px;line-height:13.33px;letter-spacing:-0.484px;color:#dcdcdc">Run</span>
<span class="t" style="left:306.90px;top:87.99px;font-size:13.33px;line-height:13.33px;letter-spacing:0.108px;color:#dcdcdc">Clear</span>
<span class="t" style="left:930.60px;top:61.99px;font-size:13.33px;line-height:13.33px;letter-spacing:0.169px;color:#dcdcdc">Object manager</span>
<span class="t" style="left:929.60px;top:81.99px;font-size:13.33px;line-height:13.33px;letter-spacing:0.195px;color:#dcdcdc">Object</span>
<span class="t" style="left:1029.40px;top:81.99px;font-size:13.33px;line-height:13.33px;letter-spacing:0.138px;color:#dcdcdc">Visi</span>
<span class="t" style="left:1055.10px;top:81.99px;font-size:13.33px;line-height:13.33px;letter-spacing:-0.189px;color:#dcdcdc">Tags</span>
<span class="t" style="left:979.60px;top:102.99px;font-size:13.33px;line-height:13.33px;letter-spacing:-0.117px;color:#dcdcdc">Proce...</span>
<span class="t" style="left:1480.50px;top:166.99px;font-size:13.33px;line-height:13.33px;letter-spacing:-0.541px;color:#dcdcdc">U</span>
<span class="t" style="left:965.80px;top:199.99px;font-size:13.33px;line-height:13.33px;letter-spacing:-0.044px;color:#dcdcdc">ProceduralPath [ProceduralPath]</span>
<span class="t" style="left:1069.50px;top:237.99px;font-size:13.33px;line-height:13.33px;letter-spacing:-0.005px;color:#dcdcdc">basic</span>
<span class="t" style="left:1324.60px;top:237.99px;font-size:13.33px;line-height:13.33px;letter-spacing:0.059px;color:#dcdcdc">Procedural path</span>
<span class="t" style="left:963.60px;top:432.98px;font-size:13.33px;line-height:13.33px;letter-spacing:-0.219px;color:#dcdcdc">Code</span>
<span class="t" style="left:963.60px;top:621.99px;font-size:13.33px;line-height:13.33px;letter-spacing:0.124px;color:#dcdcdc">Count</span>
<span class="t" style="left:1009.10px;top:620.99px;font-size:13.33px;line-height:13.33px;letter-spacing:0.036px;color:#dcdcdc">10</span>
<span class="t" style="left:982.80px;top:654.99px;font-size:13.33px;line-height:13.33px;letter-spacing:-0.183px;color:#dcdcdc">Closed</span>
<span class="t" style="left:415.90px;top:751.99px;font-size:13.33px;line-height:13.33px;letter-spacing:-0.097px;color:#dcdcdc">Repeat</span>
<span class="t" style="left:663.80px;top:752.99px;font-size:13.33px;line-height:13.33px;letter-spacing:-1.922px;color:#dcdcdc">1</span>
<span class="t" style="left:757.80px;top:752.99px;font-size:13.33px;line-height:13.33px;letter-spacing:-1.922px;color:#dcdcdc">1</span>
<span class="t" style="left:851.30px;top:752.99px;font-size:13.33px;line-height:13.33px;letter-spacing:0.050px;color:#dcdcdc">100</span>
<span class="t" style="left:5.60px;top:811.99px;font-size:13.33px;line-height:13.33px;letter-spacing:0.174px;color:#dcdcdc">Style manager</span>
<span class="t" style="left:1137.80px;top:749.99px;font-size:13.33px;line-height:13.33px;letter-spacing:0.011px;color:#dcdcdc">Boundin Box Manager</span>
<span class="t" style="left:1142.70px;top:817.99px;font-size:13.33px;line-height:13.33px;letter-spacing:-0.274px;color:#dcdcdc">Pos.<u>x</u>:</span>
<span class="t" style="left:1142.70px;top:846.99px;font-size:13.33px;line-height:13.33px;letter-spacing:-0.274px;color:#dcdcdc"><u>P</u>os.y:</span>
<span class="t" style="left:1187.80px;top:817.99px;font-size:13.33px;line-height:13.33px;letter-spacing:0.208px;color:#dcdcdc">0.000</span>
<span class="t" style="left:1187.80px;top:846.99px;font-size:13.33px;line-height:13.33px;letter-spacing:0.208px;color:#dcdcdc">0.000</span>
<span class="t" style="left:1325.70px;top:817.99px;font-size:13.33px;line-height:13.33px;letter-spacing:0.236px;color:#dcdcdc"><u>W</u>idth:</span>
<span class="t" style="left:1325.70px;top:846.99px;font-size:13.33px;line-height:13.33px;letter-spacing:0.181px;color:#dcdcdc"><u>H</u>eight:</span>
<span class="t" style="left:1378.90px;top:817.99px;font-size:13.33px;line-height:13.33px;letter-spacing:0.188px;color:#8a8a8a">0.000</span>
<span class="t" style="left:1378.90px;top:846.99px;font-size:13.33px;line-height:13.33px;letter-spacing:0.188px;color:#8a8a8a">0.000</span>
</body></html>
